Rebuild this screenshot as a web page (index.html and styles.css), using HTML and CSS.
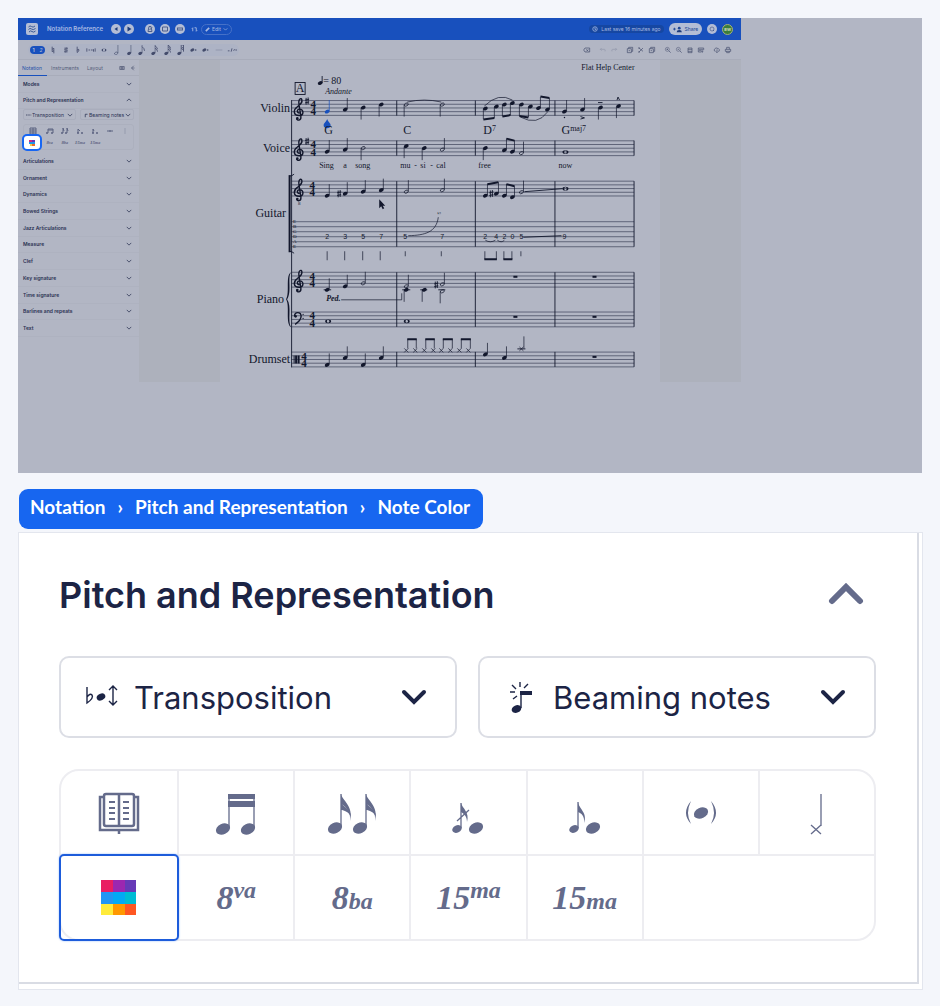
FILE: index.html
```html
<!DOCTYPE html>
<html lang="en">
<head>
    <meta charset="UTF-8">
    <meta name="viewport" content="width=device-width, initial-scale=1.0">
    <title>Notation Reference</title>
    <link rel="stylesheet" href="styles.css">
</head>
<body>

    <!-- Shared shapes -->
    <svg class="sprite" aria-hidden="true">
        <defs>
            <ellipse id="head" rx="2.5" ry="1.8" transform="rotate(-25)"/>
            <g id="qu"><use href="#head"/><path class="thin" d="M2.1 -.5V-11.5"/></g>
            <g id="qd"><use href="#head"/><path class="thin" d="M-2.1 .5V12"/></g>
            <ellipse id="hhead" class="open" rx="2.1" ry="1.4" transform="rotate(-25)"/>
            <g id="hu"><use href="#hhead"/><path class="thin" d="M2.1 -.5V-11.5"/></g>
            <g id="hd"><use href="#hhead"/><path class="thin" d="M-2.1 .5V12"/></g>
            <path id="whole" fill-rule="evenodd" d="M-3 0a3 1.9 0 1 0 6 0a3 1.9 0 1 0 -6 0zM-1.2 -.4a1.2 1.4 0 1 0 2.4 .8a1.2 1.4 0 1 0 -2.4 -.8z"/>
            <path id="sharp" class="line" d="M-1 -3.2V3.6M1 -3.6V3.2M-2 -.9L2 -1.8M-2 1.8L2 .9"/>
            <path id="xhead" class="thin" d="M-2 -2L2 2M-2 2L2 -2"/>
            <rect id="rest" x="-2" y="-1" width="4" height="2"/>
            <g id="treble">
                <path class="clef" d="M.5 1.5C-2.5 1 -2.5 -2.4 .5 -2.4C5 -2.4 5 4 0 4C-6 4 -6 -1.5 -2 -4.5C1.5 -7.5 3.5 -9 2.7 -11.8C2 -14 0 -12.8 -.3 -10C-.5 -8 1.5 2 1.8 5.5C2 9 -2 9.5 -2.5 7"/>
                <circle cx="-1.8" cy="6.8" r="1.3"/>
            </g>
            <path id="staff" class="rule" d="M291.5 0H633.5M291.5 3.7H633.5M291.5 7.4H633.5M291.5 11.1H633.5M291.5 14.8H633.5"/>
            <g id="common"><text class="time" x="0" y="7.4">4</text><text class="time" x="0" y="14.8">4</text></g>
            <path id="down" class="chevron" d="M1 2L4 5L7 2"/>
            <path id="up" class="chevron" d="M1 5L4 2L7 5"/>
            <path id="flag" d="M0 0C1 6 13 12 9 27C10 19 6 13 0 10z"/>
            <ellipse id="bighead" rx="7.4" ry="5.3" transform="rotate(-25)"/>
            <ellipse id="smallhead" rx="5" ry="3.6" transform="rotate(-25)"/>
        </defs>
    </svg>

    <main class="page">

        <!-- Dimmed editor with the highlighted tool -->
        <section class="overview" aria-label="Editor overview">
            <div class="editor">
                <header class="topbar">
                    <svg class="logo" viewBox="0 0 12 12"><rect width="12" height="12" rx="2"/><path d="M2.5 4Q4 2 5.5 3.5T9 3M2.5 6.5Q4 4.5 5.5 6T9.5 5.5M3 9Q4.5 7 6 8.5T9.5 8"/></svg>
                    <span class="doc-title">Notation Reference</span>
                    <div class="transport">
                        <button class="round" aria-label="Back to start"><svg viewBox="0 0 10 10"><path class="solid" d="M6.5 3v4L3.5 5z"/></svg></button>
                        <button class="round" aria-label="Play"><svg viewBox="0 0 10 10"><path class="solid" d="M3.5 2.5v5L7.5 5z"/></svg></button>
                    </div>
                    <div class="views">
                        <button class="round" aria-label="Metronome"><svg viewBox="0 0 10 10"><path d="M3 7.5L4 2.5H6L7 7.5zM4.5 6L7 3.5"/></svg></button>
                        <button class="round" aria-label="Loop"><svg viewBox="0 0 10 10"><path d="M2.5 3H7.5V7H2.5z"/></svg></button>
                        <button class="round" aria-label="Mixer"><svg viewBox="0 0 10 10"><path d="M2.5 3.5V6.5M4 3V7M6 3V7M7.5 3.5V6.5"/></svg></button>
                    </div>
                    <svg class="swap" viewBox="0 0 8 8"><path d="M2 6V2L1 3M4 2H6V6L7 5"/></svg>
                    <button class="edit"><svg viewBox="0 0 6 6"><path class="pencil" d="M1 5L5 1"/></svg>Edit<svg viewBox="0 0 8 8"><use href="#down"/></svg></button>
                    <div class="topbar-right">
                        <span class="saved"><svg viewBox="0 0 8 8"><circle cx="4" cy="4" r="3"/><path d="M4 2V4.5H5.5"/></svg>Last save 16 minutes ago</span>
                        <button class="share"><svg viewBox="0 0 10 8"><circle cx="7" cy="2.5" r="1.6"/><path class="solid" d="M4 7Q4 4.5 7 4.5T10 7z"/><path d="M0 3.5H3M1.5 2V5"/></svg>Share</button>
                        <button class="round" aria-label="Search"><svg viewBox="0 0 10 10"><circle class="open" cx="5" cy="5" r="2"/><path d="M6 6L7 7"/></svg></button>
                        <span class="avatar">BW</span>
                    </div>
                </header>

                <div class="toolbar">
                    <div class="note-tools">
                        <span class="voice"><b>1</b><i>2</i></span>
                        <button aria-label="Natural"><svg viewBox="0 0 12 12"><path d="M5 2V8L7 7M7 10V4L5 5"/></svg></button>
                        <button aria-label="Sharp"><svg viewBox="0 0 12 12"><use href="#sharp" x="6" y="6"/></svg></button>
                        <button aria-label="Flat"><svg viewBox="0 0 12 12"><path d="M5 2V9Q8 7 7 5.5T5 6.5"/></svg></button>
                        <button aria-label="More accidentals"><svg viewBox="0 0 12 12"><path d="M1 4V8M3 6H5M6 6H8M9 5V8M11 4V8"/></svg></button>
                        <button aria-label="Whole note"><svg viewBox="0 0 12 12"><use href="#whole" x="6" y="6"/></svg></button>
                        <button aria-label="Half note"><svg viewBox="0 0 12 12"><use href="#hu" x="5" y="10"/></svg></button>
                        <button aria-label="Quarter note"><svg viewBox="0 0 12 12"><use href="#qu" x="5" y="10"/></svg></button>
                        <button aria-label="Eighth note"><svg viewBox="0 0 12 12"><use href="#qu" x="4" y="10"/><path d="M6 2Q9 4 9 7"/></svg></button>
                        <button aria-label="16th note"><svg viewBox="0 0 12 12"><use href="#qu" x="4" y="10"/><path d="M6 1Q9 3 9 5M6 4Q9 5 9 8"/></svg></button>
                        <button aria-label="32nd note"><svg viewBox="0 0 12 12"><use href="#qu" x="4" y="10"/><path d="M6 0Q9 2 9 4M6 2Q9 4 9 6M6 5Q9 6 9 9"/></svg></button>
                        <button aria-label="64th note"><svg viewBox="0 0 12 12"><use href="#qu" x="4" y="10"/><path d="M6 0H9V8M6 2L9 4M6 4L9 6"/></svg></button>
                        <button aria-label="Dot"><svg viewBox="0 0 12 12"><use href="#head" x="4" y="6"/><circle cx="8" cy="6" r="1"/></svg></button>
                        <button aria-label="Double dot"><svg viewBox="0 0 12 12"><use href="#head" x="4" y="6"/><circle cx="8" cy="6" r="1"/></svg></button>
                        <button aria-label="Tie" class="faint"><svg viewBox="0 0 12 12"><path d="M2 6H10"/></svg></button>
                        <button aria-label="Tuplet"><svg viewBox="0 0 12 12"><path d="M1 7H3M5 8L6 4M8 7L9 5M10 6H12"/></svg></button>
                    </div>
                    <div class="file-tools">
                        <button aria-label="Delete"><svg viewBox="0 0 12 12"><path d="M1 6L3 3H10V9H3zM5 5L8 8M8 5L5 8"/></svg></button>
                        <span class="gap"></span>
                        <button aria-label="Undo" class="faint"><svg viewBox="0 0 12 12"><path d="M4 3L2 5L4 7M2 5H8Q10 5 9 8"/></svg></button>
                        <button aria-label="Redo" class="faint"><svg viewBox="0 0 12 12"><path d="M8 3L10 5L8 7M10 5H4Q2 5 3 8"/></svg></button>
                        <span class="gap"></span>
                        <button aria-label="Copy"><svg viewBox="0 0 12 12"><path d="M2 4H8V10H2zM4 4V2H10V8H8M4 7H6"/></svg></button>
                        <button aria-label="Cut"><svg viewBox="0 0 12 12"><path d="M3 3L9 8M3 9L9 3"/><circle cx="3" cy="3" r="1"/><circle cx="3" cy="9" r="1"/></svg></button>
                        <button aria-label="Paste"><svg viewBox="0 0 12 12"><path d="M2 4H8V10H2zM4 4V2H10V8H8M4 7H6"/></svg></button>
                        <span class="gap"></span>
                        <button aria-label="Zoom in"><svg viewBox="0 0 12 12"><circle class="open" cx="5" cy="5" r="3"/><path d="M7 7L10 10M4 5H6M5 4V6"/></svg></button>
                        <button aria-label="Zoom out"><svg viewBox="0 0 12 12"><circle class="open" cx="5" cy="5" r="3"/><path d="M7 7L10 10M4 5H6"/></svg></button>
                        <button aria-label="Layout"><svg viewBox="0 0 12 12"><path d="M3 3H9V10H3zM3 5H9M3 8H9"/></svg></button>
                        <button aria-label="View"><svg viewBox="0 0 12 12"><path d="M2 3H10V6M2 3V9H6M3 5H9M3 7H7M6 9L9 7L8 10"/></svg></button>
                        <span class="gap"></span>
                        <button aria-label="Export"><svg viewBox="0 0 12 12"><path d="M4 8Q1 8 2 5Q4 1 8 4Q11 5 9 8H8M6 5V10M5 9L6 10L7 9"/></svg></button>
                        <button aria-label="Print"><svg viewBox="0 0 12 12"><path d="M4 5V2H8V5M2 5H10V8H2zM4 8V10H8V8"/></svg></button>
                    </div>
                </div>

                <div class="workspace">
                    <aside class="sidebar">
                        <div class="tabs">
                            <button class="tab active">Notation</button>
                            <button class="tab">Instruments</button>
                            <button class="tab">Layout</button>
                            <span class="tab-icons">
                                <svg viewBox="0 0 8 8"><path d="M1 2H7V6H1zM2 4H6M3 2V6M5 2V6"/></svg>
                                <svg viewBox="0 0 8 8"><path d="M5 1L2 4L5 7M2 4H6"/></svg>
                            </span>
                        </div>
                        <div class="sections">
                            <button class="row">Modes<svg viewBox="0 0 8 7"><use href="#down"/></svg></button>
                            <button class="row">Pitch and Representation<svg viewBox="0 0 8 7"><use href="#up"/></svg></button>
                        </div>
                        <div class="mini-panel">
                            <div class="mini-selects">
                                <div class="mini-select">
                                    <svg viewBox="0 0 8 8"><path d="M0 4H2M3 4H5M6 4H7"/></svg>
                                    <select aria-label="Transposition"><option>Transposition</option></select>
                                    <svg viewBox="0 0 8 7"><use href="#down"/></svg>
                                </div>
                                <div class="mini-select">
                                    <svg viewBox="0 0 8 8"><path d="M3 7V3H6"/></svg>
                                    <select aria-label="Beaming notes"><option>Beaming notes</option></select>
                                    <svg viewBox="0 0 8 7"><use href="#down"/></svg>
                                </div>
                            </div>
                            <div class="mini-grid">
                                <button aria-label="Reading"><svg viewBox="0 0 12 8"><path d="M3 1H9V7H3zM6 1V7M3 3H9M3 5H9"/></svg></button>
                                <button aria-label="Beam"><svg viewBox="0 0 12 8"><path d="M4 6V2H9V6M4 3H9"/><circle cx="3" cy="6" r="1"/><circle cx="8" cy="6" r="1"/></svg></button>
                                <button aria-label="Unbeam"><svg viewBox="0 0 12 8"><path d="M4 6V1L5 4M8 6V1L9 4"/><circle cx="3" cy="6" r="1"/><circle cx="7" cy="6" r="1"/></svg></button>
                                <button aria-label="Acciaccatura"><svg viewBox="0 0 12 8"><path d="M4 6V2L6 4"/><circle cx="4" cy="6" r="1"/><circle cx="8" cy="6" r="1"/></svg></button>
                                <button aria-label="Appoggiatura"><svg viewBox="0 0 12 8"><path d="M4 6V2L5 4"/><circle cx="4" cy="6" r="1"/><circle cx="8" cy="6" r="1"/></svg></button>
                                <button aria-label="Ghost note"><svg viewBox="0 0 12 8"><path d="M4 3V5M8 3V5"/><circle cx="6" cy="4" r="1"/></svg></button>
                                <button aria-label="Note head" class="faint"><svg viewBox="0 0 12 8"><path d="M6 1V7"/></svg></button>
                                <button aria-label="Note color" class="spot"><svg viewBox="0 0 6 6"><path d="M0 0h3v2H0z"/><path d="M3 0h3v2H3z"/><path d="M0 2h6v2H0z"/><path d="M1 4h2v2H1z"/><path d="M3 4h3v2H3z"/></svg></button>
                                <button class="mini-text">8<sup>va</sup></button>
                                <button class="mini-text">8<sub>ba</sub></button>
                                <button class="mini-text">15<sup>ma</sup></button>
                                <button class="mini-text">15<sub>ma</sub></button>
                            </div>
                        </div>
                        <div class="sections more">
                            <button class="row">Articulations<svg viewBox="0 0 8 7"><use href="#down"/></svg></button>
                            <button class="row">Ornament<svg viewBox="0 0 8 7"><use href="#down"/></svg></button>
                            <button class="row">Dynamics<svg viewBox="0 0 8 7"><use href="#down"/></svg></button>
                            <button class="row">Bowed Strings<svg viewBox="0 0 8 7"><use href="#down"/></svg></button>
                            <button class="row">Jazz Articulations<svg viewBox="0 0 8 7"><use href="#down"/></svg></button>
                            <button class="row">Measure<svg viewBox="0 0 8 7"><use href="#down"/></svg></button>
                            <button class="row">Clef<svg viewBox="0 0 8 7"><use href="#down"/></svg></button>
                            <button class="row">Key signature<svg viewBox="0 0 8 7"><use href="#down"/></svg></button>
                            <button class="row">Time signature<svg viewBox="0 0 8 7"><use href="#down"/></svg></button>
                            <button class="row">Barlines and repeats<svg viewBox="0 0 8 7"><use href="#down"/></svg></button>
                            <button class="row">Text<svg viewBox="0 0 8 7"><use href="#down"/></svg></button>
                        </div>
                    </aside>

                    <div class="canvas">
                        <svg class="sheet" viewBox="220 60 439 322">
                            <text class="t8" x="634" y="70" text-anchor="end">Flat Help Center</text>

                            <!-- Rehearsal mark and tempo -->
                            <rect class="line" x="295" y="82.5" width="10" height="12"/>
                            <text class="t12" x="300" y="92" text-anchor="middle">A</text>
                            <use href="#head" x="320" y="83"/><path class="line" d="M322 83V76"/>
                            <text class="t10" x="323" y="84">= 80</text>
                            <text class="t8 it" x="325" y="94">Andante</text>

                            <!-- Instrument names -->
                            <text class="t12" x="290" y="112" text-anchor="end">Violin</text>
                            <text class="t12" x="290" y="152" text-anchor="end">Voice</text>
                            <text class="t12" x="286" y="217" text-anchor="end">Guitar</text>
                            <text class="t12" x="284" y="303" text-anchor="end">Piano</text>
                            <text class="t12" x="290" y="363" text-anchor="end">Drumset</text>

                            <!-- Staves -->
                            <use href="#staff" y="100.5"/>
                            <use href="#staff" y="140.7"/>
                            <use href="#staff" y="181"/>
                            <path class="rule" d="M291.5 221.5H633.5M291.5 226.5H633.5M291.5 231.5H633.5M291.5 236.5H633.5M291.5 241.5H633.5M291.5 246.5H633.5"/>
                            <use href="#staff" y="272"/>
                            <use href="#staff" y="311.7"/>
                            <use href="#staff" y="351.7"/>
                            <path class="line" d="M291.5 100V367"/>
                            <path class="bar" d="M396.5 100.5V115.5M475 100.5V115.5M554.5 100.5V115.5M633.5 100.5V115.5M396.5 140.5V155.5M475 140.5V155.5M554.5 140.5V155.5M633.5 140.5V155.5M396.5 181V246.5M475 181V246.5M554.5 181V246.5M633.5 181V246.5M396.5 272V326.5M475 272V326.5M554.5 272V326.5M633.5 272V326.5M396.5 351.5V366.5M475 351.5V366.5M554.5 351.5V366.5M633.5 351.5V366.5"/>
                            <path class="bracket" d="M289.5 175V252"/><path class="line" d="M289 176Q292 176 294 174M289 251Q292 251 294 253"/>
                            <path d="M291 272C285 275 290 292 286 299C290 306 285 323 291 327C287 321 292 306 287 299C292 292 287 277 291 272z"/>

                            <!-- Clefs, keys and time signatures -->
                            <use href="#treble" x="299" y="111.5"/><use href="#treble" x="299" y="151.7"/>
                            <use href="#treble" x="299" y="192"/><use href="#treble" x="299" y="283"/>
                            <text class="t5" x="298" y="205">8</text>
                            <use href="#sharp" x="307" y="101"/><use href="#sharp" x="307" y="141.2"/>
                            <path class="clef" d="M294.5 316C294 311 301 311 301 316C301 320 298 322 295 324"/><circle cx="295.5" cy="316" r="1.3"/><circle cx="303" cy="314" r=".7"/><circle cx="303" cy="318" r=".7"/>
                            <path d="M293.5 355h1v8h-1zM295 355h2v8h-2zM297.5 355h2v8h-2z"/>
                            <use href="#common" x="313" y="100.5"/><use href="#common" x="313" y="140.7"/><use href="#common" x="312" y="181"/>
                            <use href="#common" x="312" y="272"/><use href="#common" x="312" y="311.7"/><use href="#common" x="304" y="351.7"/>

                            <!-- Violin -->
                            <g class="picked"><use href="#qu" x="327" y="111.5"/><path d="M327 119C328 122 330.5 123 330.5 125.5C330.5 129 323.5 129 323.5 125.5C323.5 123 326 122 327 119z"/></g>
                            <use href="#qu" x="345" y="109.5"/><use href="#qd" x="363" y="107.5"/><use href="#qd" x="381" y="104.5"/>
                            <use href="#hd" x="406" y="104.5"/><use href="#hd" x="442" y="104.5"/><path class="curve" d="M407 102Q424 98 441 102"/>
                            <use href="#head" x="485" y="108.5"/><use href="#head" x="496" y="106.5"/><use href="#head" x="504" y="104.5"/><use href="#head" x="512" y="103"/>
                            <use href="#head" x="521" y="104.5"/><use href="#head" x="530" y="106.5"/><use href="#head" x="538" y="108"/><use href="#head" x="547" y="109.5"/>
                            <path class="thin" d="M483 109V119M494 107V118M502 105V116M510 103V115M519 105V116M528 107V117M540 108V97M549 109V98"/>
                            <path class="beam" d="M483 119.5L494 118M502 116.5L510 115M519 116L528 117.5M540 96.5L549 98"/>
                            <path class="curve" d="M484 106Q498 92 512 100M520 117Q537 126 547 112"/>
                            <use href="#qu" x="564" y="111.5"/><use href="#qu" x="582" y="109.5"/><use href="#qd" x="600" y="107.5"/><use href="#qd" x="618" y="106"/>
                            <circle cx="564" cy="117.5" r=".7"/><path class="line" d="M580 116.5L584 117.8L580 119M597.5 102.5H602M616.5 100L617.5 97L619 100"/>

                            <!-- Chord names -->
                            <text class="t12" x="324" y="134">G</text><text class="t12" x="403" y="134">C</text>
                            <text class="t12" x="483" y="134">D<tspan class="t8" dy="-3">7</tspan></text>
                            <text class="t12" x="561" y="134">G<tspan class="t8" dy="-3">maj7</tspan></text>

                            <!-- Voice -->
                            <use href="#qu" x="327" y="151.5"/><use href="#qu" x="345" y="149.5"/><use href="#hd" x="363" y="148"/>
                            <use href="#qd" x="406" y="146"/><use href="#qd" x="424" y="148"/><use href="#hu" x="442" y="149.5"/>
                            <use href="#qd" x="485" y="148"/><use href="#qu" x="504" y="150"/><use href="#qu" x="512" y="151.5"/><path class="beam" d="M506 138.5L514 140.5"/>
                            <use href="#hu" x="521" y="153"/><use href="#whole" x="565" y="152"/>
                            <text class="t8" x="319" y="168">Sing</text><text class="t8" x="343" y="168">a</text><text class="t8" x="355" y="168">song</text>
                            <text class="t8" x="400" y="168">mu</text><text class="t8" x="414" y="168">-</text><text class="t8" x="420" y="168">si</text><text class="t8" x="430" y="168">-</text><text class="t8" x="436" y="168">cal</text>
                            <text class="t8" x="478" y="168">free</text><text class="t8" x="558" y="168">now</text>

                            <!-- Guitar and tablature -->
                            <use href="#qu" x="327" y="195.5"/><use href="#sharp" x="339" y="193.5"/><use href="#qu" x="345" y="193.5"/><use href="#qu" x="363" y="191.5"/><use href="#qu" x="381" y="190"/>
                            <use href="#hu" x="406" y="191.5"/><use href="#hu" x="442" y="190"/>
                            <use href="#qu" x="485" y="195.5"/><use href="#sharp" x="491" y="193.5"/><use href="#qu" x="496" y="193.5"/><use href="#qu" x="504" y="195.5"/><use href="#qu" x="512" y="197"/>
                            <path class="beam" d="M487 184L498 182M506 184L514 186"/>
                            <use href="#hu" x="521" y="192"/><path class="line" d="M524 191.5L562 188.5M523 237L561 235.5"/><use href="#whole" x="565" y="188.5"/>
                            <path d="M379 199V208L381 206L382.5 209L384 208L382.5 205.5H385z"/>
                            <text class="t5" x="293" y="223">E</text><text class="t5" x="293" y="228">B</text><text class="t5" x="293" y="233">G</text><text class="t5" x="293" y="238">D</text><text class="t5" x="293" y="243">A</text><text class="t5" x="293" y="248">E</text>
                            <g class="tab-nums">
                                <text x="325" y="239">2</text><text x="343" y="239">3</text><text x="361" y="239">5</text><text x="379" y="239">7</text>
                                <text x="403" y="239">5</text><text x="440" y="239">7</text><text x="483" y="239">2</text><text x="494" y="239">4</text><text x="502" y="239">2</text>
                                <text x="510" y="239">0</text><text x="519" y="239">5</text><text x="562" y="239">9</text>
                            </g>
                            <text class="t5" x="437" y="215">½</text>
                            <path class="curve" d="M408 235.5C425 235 436 232 438 217M485 240Q490 243 495 240M497 240Q501 243 504 240"/>
                            <path class="thin" d="M327 251V260M344.5 251V260M362.5 251V260M380 251V260M405 251V256M441 251V256M484.5 251V259M496 251V259M503.5 251V259M511.5 251V259M520.5 251V256"/>
                            <path class="beam" d="M484 259H496.5M503 259H512"/>

                            <!-- Piano -->
                            <use href="#qu" x="327" y="289.5"/><path class="line" d="M323.5 289.5H331M402 289.5H410M420 289.5H427"/><use href="#qu" x="345" y="286"/><use href="#hu" x="363" y="283"/>
                            <use href="#hu" x="406" y="286"/><use href="#qd" x="406" y="289.5"/><use href="#qd" x="424" y="289.5"/>
                            <use href="#sharp" x="436" y="284.5"/><use href="#hu" x="442" y="284"/><use href="#hd" x="442" y="291"/><path class="line" d="M438 289.5H445"/>
                            <text class="t8 it bold" x="326" y="301">Ped.</text><path class="thin" d="M341 299.5H401.5V293"/>
                            <use href="#whole" x="328" y="321"/><use href="#whole" x="406.5" y="321"/>
                            <use href="#rest" x="515" y="276.5"/><use href="#rest" x="594" y="276.5"/><use href="#rest" x="515" y="316.5"/><use href="#rest" x="594" y="316.5"/>

                            <!-- Drumset -->
                            <use href="#qu" x="327" y="364.5"/><use href="#qu" x="345" y="357.5"/><use href="#qu" x="363" y="364.5"/><use href="#qu" x="381" y="357.5"/>
                            <use href="#xhead" x="406" y="350"/><use href="#xhead" x="415" y="350"/><use href="#xhead" x="424" y="350"/><use href="#xhead" x="433" y="350"/>
                            <use href="#xhead" x="441" y="350"/><use href="#xhead" x="450" y="350"/><use href="#xhead" x="459" y="350"/><use href="#xhead" x="468" y="350"/>
                            <path class="thin" d="M407.5 348V339M416 348V339M425.5 348V339M434 348V339M443 348V339M452 348V339M461 348V339M470 348V339"/>
                            <path class="beam" d="M407 339H416.5M425 339H434.5M442.5 339H452.5M460.5 339H470.5"/>
                            <use href="#qu" x="485" y="354"/><use href="#qu" x="504" y="357.5"/><use href="#xhead" x="521" y="348.5"/><path class="thin" d="M523.5 348V336"/><path class="line" d="M517 348.5H525"/>
                            <use href="#rest" x="594" y="356.5"/>
                        </svg>
                    </div>
                </div>
            </div>
        </section>

        <nav class="breadcrumb" aria-label="Breadcrumb">
            <span>Notation</span><span>›</span><span>Pitch and Representation</span><span>›</span><span>Note Color</span>
        </nav>

        <!-- Enlarged panel -->
        <section class="card">
            <div class="panel">
                <div class="panel-head">
                    <h1>Pitch and Representation</h1>
                    <button class="collapse" aria-label="Collapse"><svg viewBox="0 0 36 24"><path d="M4 18L18 4L32 18"/></svg></button>
                </div>

                <div class="selects">
                    <div class="select">
                        <svg class="select-icon" viewBox="0 0 36 36">
                            <path class="stroke" d="M3 9V25Q10 20 8 17Q6 15 3 19M29 8V27M25 12L29 8L33 12M25 23L29 27L33 23"/>
                            <ellipse cx="17" cy="19" rx="4.5" ry="3.2" transform="rotate(-25 17 19)"/>
                        </svg>
                        <select aria-label="Transposition"><option>Transposition</option></select>
                        <svg class="select-arrow" viewBox="0 0 28 18"><path d="M4 4L14 14L24 4"/></svg>
                    </div>
                    <div class="select">
                        <svg class="select-icon" viewBox="0 0 36 36">
                            <path class="stroke" d="M18 14V30M17 4V9M9 7L13 11M25 6L21 10M7 14H12M14 18L10 21"/>
                            <path d="M17 13H29V17H17z"/>
                            <ellipse cx="13.5" cy="31" rx="5" ry="3.7" transform="rotate(-25 13.5 31)"/>
                        </svg>
                        <select aria-label="Beaming notes"><option>Beaming notes</option></select>
                        <svg class="select-arrow" viewBox="0 0 28 18"><path d="M4 4L14 14L24 4"/></svg>
                    </div>
                </div>

                <div class="tools">
                    <button class="tool" aria-label="Reading view">
                        <svg viewBox="0 0 60 60"><path class="book" d="M15 14H11V47H49V14H45M17 11H43Q45 11 45 13V41Q45 43 43 43H17Q15 43 15 41V13Q15 11 17 11zM30 11V43M30 47V51"/><path class="dash" d="M20 19H26M20 25H26M20 30H26M20 36H26M34 19H40M34 25H40M34 30H40M34 36H40"/></svg>
                    </button>
                    <button class="tool" aria-label="Beam notes">
                        <svg viewBox="0 0 60 60"><use href="#bighead" x="17" y="46"/><use href="#bighead" x="42" y="46"/><path class="stem" d="M23 45V11M48 45V11"/><path d="M22 11H49V16H22zM22 18H49V24H22z"/></svg>
                    </button>
                    <button class="tool" aria-label="Unbeam notes">
                        <svg viewBox="0 0 60 60"><use href="#bighead" x="13" y="45"/><use href="#bighead" x="38" y="45"/><path class="stem" d="M19 44V11M44 44V11"/><use href="#flag" x="19" y="11"/><path d="M19 19C20 24 29 25 29 34C27 29 22 27 19 27z"/><use href="#flag" x="44" y="11"/><path d="M44 19C45 24 54 25 54 34C52 29 47 27 44 27z"/></svg>
                    </button>
                    <button class="tool" aria-label="Acciaccatura">
                        <svg viewBox="0 0 60 60"><use href="#smallhead" x="19" y="46"/><use href="#bighead" x="38" y="45"/><path class="stem" d="M23 45V20M19 38L31 27"/><path d="M23 20C24 25 32 29 29 39C29 33 26 31 23 29z"/></svg>
                    </button>
                    <button class="tool" aria-label="Appoggiatura">
                        <svg viewBox="0 0 60 60"><use href="#smallhead" x="19" y="46"/><use href="#bighead" x="38" y="45"/><path class="stem" d="M23 45V19"/><path d="M23 19C24 26 33 30 29 40C30 33 26 30 23 29z"/></svg>
                    </button>
                    <button class="tool" aria-label="Ghost note">
                        <svg viewBox="0 0 60 60"><use href="#bighead" x="30" y="30"/><path d="M20 18Q10 30 20 41Q14 30 20 18zM40 18Q50 30 40 41Q46 30 40 18z"/></svg>
                    </button>
                    <button class="tool" aria-label="Note head">
                        <svg viewBox="0 0 60 60"><path class="stem" d="M34 11V43M24 42L34 51M34 42L24 51"/></svg>
                    </button>
                    <button class="tool selected" aria-label="Note color">
                        <svg viewBox="0 0 60 60" shape-rendering="crispEdges">
                            <path fill="#e91e63" d="M12 12h12v12H12z"/><path fill="#9c27b0" d="M24 12h12v12H24z"/><path fill="#673ab7" d="M36 12h11v12H36z"/>
                            <path fill="#2196f3" d="M12 24h12v12H12z"/><path fill="#03a9f4" d="M24 24h12v12H24z"/><path fill="#00bcd4" d="M36 24h11v12H36z"/>
                            <path fill="#ffeb3b" d="M12 36h12v11H12z"/><path fill="#ff9800" d="M24 36h12v11H24z"/><path fill="#ff5722" d="M36 36h11v11H36z"/>
                        </svg>
                    </button>
                    <button class="tool octave">8<span class="high">va</span></button>
                    <button class="tool octave">8<span>ba</span></button>
                    <button class="tool octave">15<span class="high">ma</span></button>
                    <button class="tool octave">15<span>ma</span></button>
                </div>
            </div>
        </section>
    </main>

</body>
</html>
```
FILE: styles.css
```css
* {
    box-sizing: border-box;
}

body {
    margin: 0;
    background: #f4f6fb;
    font-family: Inter, sans-serif;
    color: #1c2445;
}

button, select {
    font: inherit;
    color: inherit;
    background: none;
    border: 0;
    border-radius: 0;
    padding: 0;
    margin: 0;
    cursor: pointer;
}

select {
    appearance: none;
}

.sprite {
    position: absolute;
    width: 0;
    height: 0;
}

.page {
    padding: 18px 17px 17px 18px;
}

/* Dimmed editor */
.overview {
    background: #b2b6c4;
    margin-right: 1px;
    padding-bottom: 91px;
    font-size: 5px;
    line-height: 8px;
    color: #2a3152;
}

.editor {
    width: 80%;
}

.editor svg {
    fill: currentColor;
}

.editor button path, .tab-icons path, .mini-select path, .swap path, .chevron {
    fill: none;
    stroke: currentColor;
}

.topbar {
    display: flex;
    align-items: center;
    height: 22px;
    padding: 0 8px;
    background: #1850bd;
    color: #a9bbe3;
}

.logo {
    width: 12px;
    height: 12px;
    margin-right: 9px;
}

.logo rect {
    fill: #b3bdd5;
}

.logo path {
    fill: none;
    stroke: #3b5a96;
}

.doc-title {
    font-size: 6px;
    font-weight: 600;
    margin-right: 8px;
}

.transport, .views {
    display: flex;
    gap: 3px;
    margin-right: 11px;
}

.views {
    gap: 5px;
}

.round {
    display: flex;
    width: 10px;
    height: 10px;
    border-radius: 50%;
    background: #b3bdd5;
    color: #4d5f8c;
}

.round svg {
    width: 10px;
    height: 10px;
}

.editor button path.solid {
    fill: #1c3a7a;
    stroke: none;
}

.swap {
    width: 7px;
    height: 7px;
    margin-left: -5px;
    margin-right: 3px;
}

.edit {
    display: flex;
    align-items: center;
    gap: 2px;
    height: 11px;
    padding: 0 3px;
    border: 1px solid #4671c8;
    border-radius: 6px;
}

.edit svg {
    width: 5px;
    height: 5px;
}

.pencil {
    stroke-width: 2;
}

.topbar-right {
    display: flex;
    align-items: center;
    gap: 5px;
    margin-left: auto;
}

.saved, .share {
    display: flex;
    align-items: center;
    gap: 3px;
    padding: 0 3px;
    border-radius: 6px;
}

.saved {
    background: #1647a2;
}

.saved svg {
    width: 6px;
    height: 6px;
    fill: none;
    stroke: currentColor;
}

.share {
    height: 12px;
    padding: 0 4px;
    background: #b3bdd5;
    color: #1c4593;
}

.share svg {
    width: 9px;
    height: 7px;
}

.avatar {
    width: 11px;
    height: 11px;
    border: 1px solid #a3b07a;
    border-radius: 50%;
    background: #3a7d3a;
    color: #d5dcc4;
    font-size: 4px;
    line-height: 9px;
    font-weight: 700;
    text-align: center;
}

/* Toolbar */
.toolbar {
    display: flex;
    justify-content: space-between;
    align-items: center;
    height: 20px;
    padding: 0 8px 0 10px;
    border-bottom: 1px solid #a8acba;
    color: #434b6b;
}

.note-tools {
    display: flex;
    justify-content: space-between;
    align-items: center;
    width: 211px;
    height: 12px;
    padding: 0 2px;
    border-radius: 6px;
    background: #adb3c5;
}

.voice {
    display: flex;
    align-items: center;
    justify-content: space-around;
    width: 15px;
    height: 8px;
    border-radius: 4px;
    background: #1850bd;
    color: #b3bdd5;
}

.toolbar button, .toolbar svg {
    display: block;
    width: 10px;
    height: 10px;
}

.file-tools {
    display: flex;
    gap: 1px;
}

.file-tools svg {
    width: 8px;
    height: 8px;
    margin: 1px;
}

.gap {
    width: 4px;
}

.faint {
    opacity: 0.3;
}

/* Sidebar */
.workspace {
    display: flex;
    align-items: stretch;
}

.sidebar {
    flex: 0 0 121px;
}

.tabs {
    display: flex;
    height: 16px;
    border-bottom: 1px solid #a8acba;
}

.tab {
    padding: 0 4px;
    color: #555d7a;
}

.tab.active {
    color: #2450a8;
    border-bottom: 1px solid #1850bd;
    margin-bottom: -1px;
    padding-right: 5px;
}

.tab-icons {
    display: flex;
    align-items: center;
    gap: 5px;
    margin-left: auto;
    padding-right: 3px;
    color: #555d7a;
}

.tab-icons svg {
    width: 6px;
    height: 6px;
}

.sections {
    display: grid;
    grid-auto-rows: 1fr;
    height: 33px;
}

.more {
    height: 184px;
}

.row {
    display: flex;
    align-items: center;
    justify-content: space-between;
    padding: 0 7px 0 5px;
    border-bottom: 1px solid #aeb2c0;
    font-weight: 600;
}

.row svg, .mini-select svg {
    width: 6px;
    height: 6px;
}

.mini-panel {
    padding: 0 5px 3px;
}

.mini-selects {
    display: grid;
    grid-template-columns: 1fr 1fr;
    gap: 4px;
    margin-bottom: 4px;
}

.mini-select {
    display: flex;
    align-items: center;
    height: 11px;
    padding: 0 2px;
    border: 1px solid #a9adbc;
    border-radius: 2px;
}

.mini-select select {
    flex: 1;
    min-width: 0;
    line-height: 8px;
}

.mini-grid {
    display: grid;
    grid-template-columns: repeat(7, 1fr);
    grid-auto-rows: 12px;
    border: 1px solid #acb0be;
    border-radius: 3px;
    color: #5b6280;
}

.mini-grid button {
    display: flex;
    align-items: center;
    justify-content: center;
}

.mini-grid svg {
    width: 12px;
    height: 8px;
}

.mini-text {
    font-family: "Liberation Serif", serif;
    font-style: italic;
    font-weight: 700;
}

.mini-text sup, .mini-text sub {
    font-size: 4px;
    line-height: 4px;
}

.mini-grid .spot {
    width: 20px;
    height: 17px;
    margin: -3px 0 0 -2px;
    border: 2px solid #1766f3;
    border-radius: 5px;
    background: #fff;
}

.mini-grid .spot svg {
    width: 6px;
    height: 6px;
}

.mini-grid .spot path {
    stroke: none;
}

.mini-grid .spot path:nth-child(1) { fill: #d22c80; }
.mini-grid .spot path:nth-child(2) { fill: #6a35b4; }
.mini-grid .spot path:nth-child(3) { fill: #2196e8; }
.mini-grid .spot path:nth-child(4) { fill: #f2d04a; }
.mini-grid .spot path:nth-child(5) { fill: #ef6a2c; }

/* Score */
.canvas {
    flex: 1;
    background: #adb1bc;
}

.sheet {
    display: block;
    width: 73%;
    margin: 0 auto;
    background: #b2b6c4;
    color: #12172c;
    font-family: "Liberation Serif", serif;
}

.thin, .line, .bar, .rule, .curve, .clef, .beam, .bracket, .open {
    fill: none;
    stroke: currentColor;
    stroke-width: 0.7;
}

.rule {
    stroke: #3c4259;
}

.bar, .line {
    stroke-width: 0.9;
}

.clef {
    stroke-width: 1.4;
}

.beam, .bracket {
    stroke-width: 2;
}

.t5 { font-size: 5px; }
.t8 { font-size: 8px; }
.t10 { font-size: 10px; }
.t12 { font-size: 12px; }
.it { font-style: italic; }
.bold { font-weight: 700; }

.time {
    font-size: 11px;
    font-weight: 700;
    text-anchor: middle;
}

.tab-nums {
    font-family: "Liberation Sans", sans-serif;
    font-size: 7px;
}

.picked {
    color: #1850bd;
    fill: #1850bd;
}

/* Breadcrumb */
.breadcrumb {
    display: flex;
    gap: 12px;
    width: fit-content;
    margin: 16px 0 3px 1px;
    padding: 0 13px 4px 11px;
    border-radius: 9px;
    background: #1766f0;
    color: #fff;
    font-family: Lato, sans-serif;
    font-size: 19px;
    font-weight: 700;
    line-height: 36px;
}

/* Enlarged panel */
.card {
    padding: 0 3px 5px 0;
    border: 1px solid #e3e6ee;
    background: #fff;
}

.panel {
    padding: 28px 41px 41px 40px;
    border-right: 2px solid #d9dce4;
    border-bottom: 2px solid #d9dce4;
}

.panel-head {
    display: flex;
    align-items: center;
    justify-content: space-between;
    height: 68px;
    padding-right: 12px;
    margin-bottom: 27px;
}

h1 {
    margin: 0;
    font-size: 36px;
    font-weight: 600;
}

.collapse svg {
    display: block;
    width: 36px;
    height: 24px;
}

.collapse path, .select-arrow path {
    fill: none;
    stroke: #646b8b;
    stroke-width: 6;
    stroke-linecap: round;
}

.selects {
    display: grid;
    grid-template-columns: 1fr 1fr;
    gap: 21px;
    margin-bottom: 31px;
}

.select {
    position: relative;
}

.select select {
    display: block;
    width: 100%;
    height: 82px;
    padding: 0 60px 0 73px;
    border: 2px solid #dcdee5;
    border-radius: 10px;
    font-size: 31px;
}

.select-icon {
    position: absolute;
    left: 25px;
    top: 22px;
    width: 36px;
    height: 36px;
    fill: currentColor;
}

.select-arrow {
    position: absolute;
    right: 29px;
    top: 32px;
    width: 28px;
    height: 18px;
}

.select-arrow path {
    stroke: #1c2445;
    stroke-width: 4;
}

.stroke {
    fill: none;
    stroke: currentColor;
    stroke-width: 1.4;
}

.tools {
    display: grid;
    grid-template-columns: repeat(7, 1fr);
    border: 2px solid #ededf1;
    border-radius: 20px;
    color: #646b8b;
}

.tool {
    display: flex;
    align-items: center;
    justify-content: center;
    height: 83px;
    border-left: 2px solid #ededf1;
}

.tool:nth-child(1) {
    border-left: 0;
}

.tool:nth-child(-n+7) {
    height: 85px;
    border-bottom: 2px solid #ededf1;
}

.tool:last-child {
    border-right: 2px solid #ededf1;
    margin-right: -2px;
}

.tool svg {
    width: 60px;
    height: 60px;
    fill: currentColor;
}

.tool.selected {
    height: 87px;
    margin: -2px -2px -2px -2px;
    border: 2px solid #1d5cdb;
    border-radius: 5px;
    box-shadow: 0 0 2px #8db8fa;
    z-index: 1;
}

.stem {
    fill: none;
    stroke: currentColor;
    stroke-width: 1.3;
}

.book, .dash {
    fill: none;
    stroke: currentColor;
    stroke-width: 2.5;
}

.dash {
    stroke-width: 2;
}

.octave {
    font-family: "Liberation Serif", serif;
    font-size: 34px;
    font-style: italic;
    font-weight: 700;
}

.octave span {
    font-size: 24px;
    padding-top: 7px;
}

.octave .high {
    padding: 0 0 14px;
}
```
